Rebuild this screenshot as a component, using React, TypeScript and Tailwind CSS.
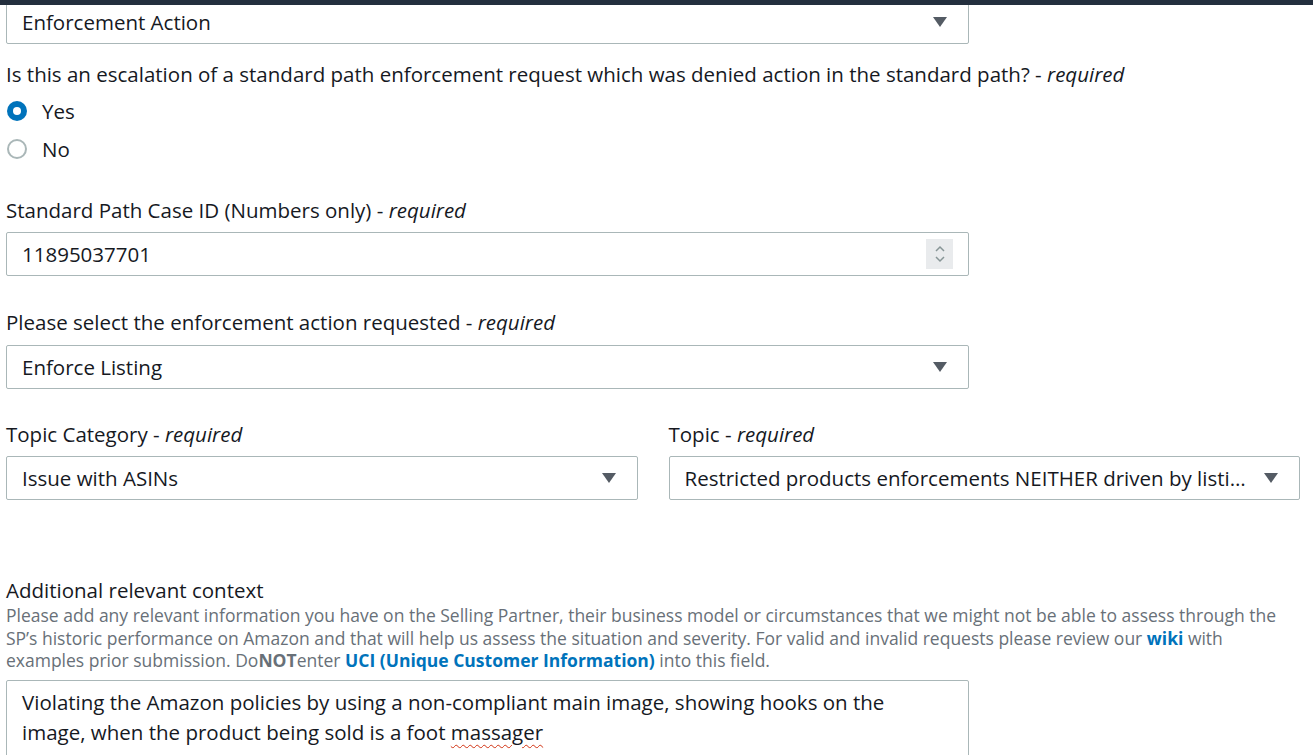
import React from 'react';

const font = { fontFamily: '"Open Sans", "Noto Sans", sans-serif' };

const Caret = () => (
  <svg width="16" height="12" viewBox="0 0 16 12" className="shrink-0">
    <polygon points="1,1 15,1 8,11" fill="#545b64" />
  </svg>
);

const Select = ({ value, className = '' }: { value: string; className?: string }) => (
  <div
    className={`flex h-[44px] items-center gap-3 rounded-[2px] border border-[#aab7b8] bg-white pl-[15px] pr-[20px] text-[20.5px] text-[#16191f] ${className}`}
  >
    <span className="flex-1 truncate">{value}</span>
    <Caret />
  </div>
);

const Label = ({ text, required = true }: { text: string; required?: boolean }) => (
  <div className="text-[20.5px] leading-[28px] text-[#16191f]">
    {text}
    {required && (
      <>
        {' - '}
        <i>required</i>
      </>
    )}
  </div>
);

const Radio = ({ label, checked }: { label: string; checked?: boolean }) => (
  <label className="flex h-[38px] items-center gap-[15px] pl-[1px]">
    {checked ? (
      <span className="flex h-[20px] w-[20px] items-center justify-center rounded-full bg-[#0073bb]">
        <span className="h-[8px] w-[8px] rounded-full bg-white" />
      </span>
    ) : (
      <span className="h-[20px] w-[20px] rounded-full border-2 border-[#aab7b8] bg-white" />
    )}
    <span className="text-[20.5px] text-[#16191f]">{label}</span>
  </label>
);

export default function App() {
  return (
    <div className="relative min-h-[755px] w-[1313px] overflow-hidden bg-white" style={font}>
      {/* sticky app header peeking over the form */}
      <div className="absolute left-0 top-0 z-10 h-[5px] w-full bg-[#232f3e]" />

      <div className="px-[6px]">
        <Select value="Enforcement Action" className="w-[963px]" />

        <div className="mt-[16px]">
          <Label text="Is this an escalation of a standard path enforcement request which was denied action in the standard path?" />
        </div>
        <div className="mt-[4px]">
          <Radio label="Yes" checked />
          <Radio label="No" />
        </div>

        <div className="mt-[28px]">
          <Label text="Standard Path Case ID (Numbers only)" />
        </div>
        <div className="mt-[8px] flex h-[44px] w-[963px] items-center rounded-[2px] border border-[#aab7b8] bg-white pl-[15px] pr-[15px] text-[20.5px] text-[#16191f]">
          <span className="flex-1">11895037701</span>
          <span className="flex h-[30px] w-[27px] flex-col items-center justify-center gap-[2px] bg-[#e9ebed]">
            <svg width="12" height="8" viewBox="0 0 12 8">
              <polyline points="2,6 6,2 10,6" fill="none" stroke="#879596" strokeWidth="1.5" />
            </svg>
            <svg width="12" height="8" viewBox="0 0 12 8">
              <polyline points="2,2 6,6 10,2" fill="none" stroke="#879596" strokeWidth="1.5" />
            </svg>
          </span>
        </div>

        <div className="mt-[32px]">
          <Label text="Please select the enforcement action requested" />
        </div>
        <Select value="Enforce Listing" className="mt-[9px] w-[963px]" />

        <div className="mt-[31px] grid w-[1294px] grid-cols-2 gap-x-[31px]">
          <div>
            <Label text="Topic Category" />
            <Select value="Issue with ASINs" className="mt-[8px]" />
          </div>
          <div>
            <Label text="Topic" />
            <Select
              value="Restricted products enforcements NEITHER driven by listing nor by customer complaints"
              className="mt-[8px]"
            />
          </div>
        </div>

        <div className="mt-[76px]">
          <Label text="Additional relevant context" required={false} />
        </div>
        <p className="w-[1290px] text-[17.5px] leading-[22.5px] text-[#687078]">
          Please add any relevant information you have on the Selling Partner, their business model or
          circumstances that we might not be able to assess through the SP’s historic performance on
          Amazon and that will help us assess the situation and severity. For valid and invalid requests
          please review our <a className="font-bold text-[#0073bb]">wiki</a> with examples prior
          submission. Do<b>NOT</b>enter{' '}
          <a className="font-bold text-[#0073bb]">UCI (Unique Customer Information)</a> into this field.
        </p>

        <div className="mt-[8px] h-[90px] w-[963px] rounded-[2px] border border-[#aab7b8] bg-white pl-[15px] pr-[15px] pt-[6px] text-[20.5px] leading-[30px] text-[#16191f]">
          Violating the Amazon policies by using a non-compliant main image, showing hooks on the
          image, when the product being sold is a foot{' '}
          <span className="underline decoration-[#d13212] decoration-wavy decoration-1 underline-offset-[4px]">massager</span>
        </div>
      </div>
    </div>
  );
}
